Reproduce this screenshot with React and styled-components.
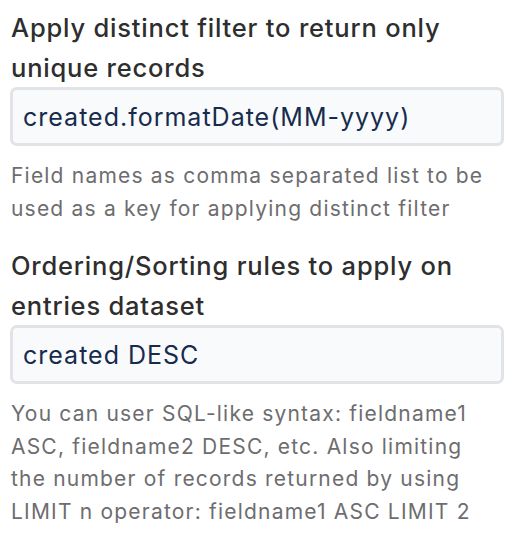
import React from 'react';
import styled, { createGlobalStyle } from 'styled-components';

const Global = createGlobalStyle`
  html, body {
    margin: 0;
    padding: 0;
    background: #ffffff;
  }
  body {
    font-family: Inter, "Liberation Sans", sans-serif;
  }
`;

const Page = styled.div`
  width: 530px;
  padding: 8px 26px 0 10px;
  box-sizing: border-box;
  display: flex;
  flex-direction: column;
  gap: 21px;
`;

const Field = styled.div`
  display: flex;
  flex-direction: column;
`;

const Label = styled.label`
  font-size: 25.5px;
  font-weight: 500;
  line-height: 40px;
  letter-spacing: 0.8px;
  color: #2e2e2e;
  padding-left: 1px;
  padding-right: 30px;
  margin-bottom: -1px;
`;

const Input = styled.input`
  box-sizing: border-box;
  width: 100%;
  height: 59px;
  padding: 0 10px;
  border: 3px solid #e2e3e7;
  border-radius: 7px;
  background: #f9fafc;
  color: #172b4d;
  font-family: inherit;
  font-size: 25px;
  letter-spacing: 1px;
  outline: none;
`;

const Help = styled.p`
  margin: 14px 0 0;
  padding-left: 1px;
  font-size: 21px;
  line-height: 32.5px;
  letter-spacing: 1.2px;
  color: #6d6d6f;
`;

export default function App() {
  return (
    <>
      <Global />
      <Page>
        <Field>
          <Label>Apply distinct filter to return only unique records</Label>
          <Input defaultValue="created.formatDate(MM-yyyy)" />
          <Help>Field names as comma separated list to be used as a key for applying distinct filter</Help>
        </Field>
        <Field>
          <Label>Ordering/Sorting rules to apply on entries dataset</Label>
          <Input defaultValue="created DESC" />
          <Help>
            You can user SQL-like syntax: fieldname1 ASC, fieldname2 DESC, etc. Also limiting the number of
            records returned by using LIMIT n operator: fieldname1 ASC LIMIT 2
          </Help>
        </Field>
      </Page>
    </>
  );
}
